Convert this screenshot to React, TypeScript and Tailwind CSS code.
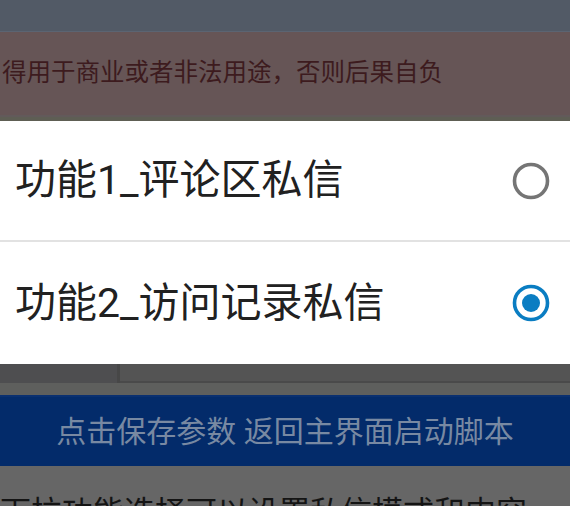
import React from "react";

const cjk = { fontFamily: '"Roboto", "Noto Sans CJK SC", sans-serif' };

function Radio({ checked }: { checked: boolean }) {
  return (
    <svg width="40" height="40" viewBox="0 0 40 40">
      <circle
        cx="20"
        cy="20"
        r="16.5"
        fill="none"
        stroke={checked ? "#0a7dc2" : "#757575"}
        strokeWidth="3.6"
      />
      {checked && <circle cx="20" cy="20" r="9" fill="#0a7dc2" />}
    </svg>
  );
}

export default function App() {
  return (
    <div className="w-[570px] h-[506px] overflow-hidden flex flex-col bg-[#666666]" style={cjk}>
      <div className="h-[32px] shrink-0 bg-[#525a66] border-b border-[#5b6472]" />
      <div className="h-[83px] shrink-0 bg-[#665556] flex items-center pl-[2px]">
        <span className="text-[24.5px] leading-none text-[#3d1b1e] whitespace-nowrap">
          得用于商业或者非法用途，否则后果自负
        </span>
      </div>
      <div className="h-[6px] shrink-0 bg-[#5e5e54] border-t-2 border-[#625a5a]" />
      <div className="h-[243px] shrink-0 bg-white flex flex-col">
        <div className="h-[121px] flex items-center justify-between pl-[15px] pr-[19px] border-b-2 border-[#e2e2e2]">
          <span className="text-[41px] leading-none text-[#212121] whitespace-nowrap">功能1_评论区私信</span>
          <Radio checked={false} />
        </div>
        <div className="flex-1 flex items-center justify-between pl-[15px] pr-[19px]">
          <span className="text-[41px] leading-none text-[#212121] whitespace-nowrap">功能2_访问记录私信</span>
          <Radio checked={true} />
        </div>
      </div>
      <div className="h-[19px] shrink-0 flex">
        <div className="w-[120px] bg-[#4e4e50] border-r-[3px] border-[#474747]" />
        <div className="flex-1 bg-[#545454] border-b-2 border-[#4a4a4a]" />
      </div>
      <div className="h-[12px] shrink-0 bg-[#5e5f5d]" />
      <div className="h-[71px] shrink-0 bg-[#032b6a] border-t-2 border-[#0a3070] flex items-center justify-center">
        <span className="text-[30px] leading-none text-[#7889a2] whitespace-nowrap">
          点击保存参数 返回主界面启动脚本
        </span>
      </div>
      <div className="flex-1 bg-[#666666] pt-[31px] overflow-hidden">
        <span className="text-[31px] leading-none text-[#141414] whitespace-nowrap">
          下拉功能选择可以设置私信模式和内容
        </span>
      </div>
    </div>
  );
}
